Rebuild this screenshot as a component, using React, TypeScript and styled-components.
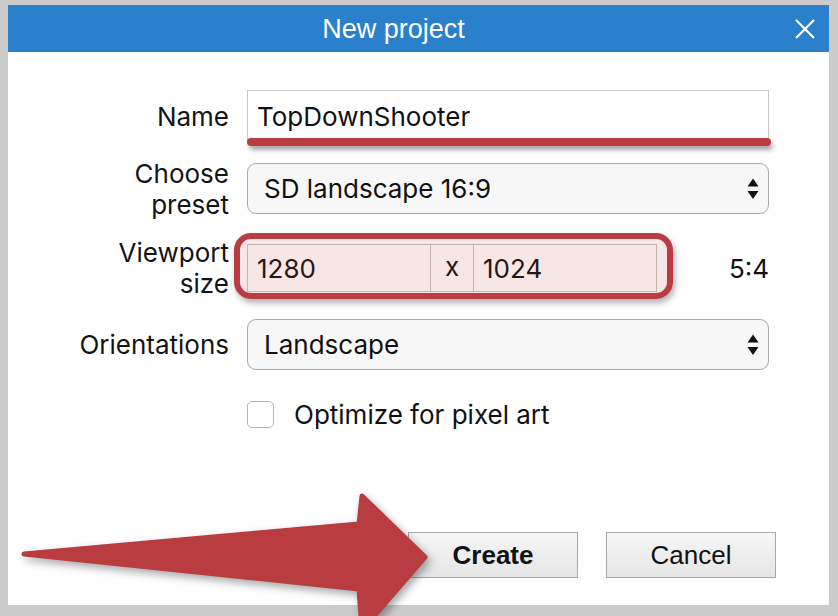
import React from "react";
import styled, { createGlobalStyle } from "styled-components";

const Global = createGlobalStyle`
  html, body { margin: 0; padding: 0; }
  body { background: #cbcbcb; width: 838px; height: 616px; overflow: hidden; }
`;

const RED = "#b83c40";
const SF = `"Inter", "Liberation Sans", sans-serif`;
const HV = `"Liberation Sans", Arial, sans-serif`;

const Frame = styled.div`
  position: relative;
  width: 838px;
  height: 616px;
  box-sizing: border-box;
  padding: 5px 9px 11px 8px;
`;

const Dialog = styled.div`
  background: #ffffff;
  height: 600px;
  display: flex;
  flex-direction: column;
`;

const TitleBar = styled.div`
  height: 47px;
  background: #2b80cc;
  display: flex;
  align-items: center;
`;

const Title = styled.div`
  flex: 1;
  text-align: center;
  color: #ffffff;
  font-family: ${HV};
  font-size: 27px;
  padding-top: 2px;
`;

const CloseButton = styled.div`
  width: 50px;
  height: 47px;
  display: flex;
  align-items: center;
  justify-content: center;
  padding-left: 2px;
  box-sizing: border-box;
`;

const Form = styled.div`
  display: flex;
  flex-direction: column;
  padding: 38px 60px 0 0;
`;

const Row = styled.div<{ $top: number; $h: number }>`
  display: grid;
  grid-template-columns: 221px 522px;
  grid-template-rows: ${(p) => p.$h}px;
  column-gap: 18px;
  align-items: center;
  margin-top: ${(p) => p.$top}px;
  height: ${(p) => p.$h}px;
`;

const Label = styled.div`
  text-align: right;
  font-family: ${SF};
  font-size: 26px;
  line-height: 31px;
  color: #141414;
`;

const TextInput = styled.div`
  position: relative;
  height: 52px;
  box-sizing: border-box;
  border: 1px solid #c6c6c6;
  background: #ffffff;
  display: flex;
  align-items: center;
  padding: 0 0 0 9px;
  font-family: ${SF};
  font-size: 26px;
  color: #111;
`;

const Underline = styled.div`
  position: absolute;
  left: -1px;
  right: -3px;
  bottom: -5px;
  height: 8px;
  border-radius: 4px;
  background: ${RED};
  box-shadow: 2px 4px 5px rgba(0, 0, 0, 0.35);
`;

const Select = styled.div`
  height: 51px;
  box-sizing: border-box;
  border: 1.5px solid #a9a9a9;
  border-radius: 9px;
  background: #f7f7f7;
  display: flex;
  align-items: center;
  justify-content: space-between;
  padding: 0 9px 0 16px;
  font-family: ${SF};
  font-size: 26px;
  color: #111;
`;

const ViewportLine = styled.div`
  display: flex;
  align-items: center;
  justify-content: space-between;
  height: 48px;
`;

const SizeGroup = styled.div`
  position: relative;
  display: flex;
  height: 48px;
`;

const SizeBox = styled.div`
  width: 184px;
  height: 48px;
  box-sizing: border-box;
  border: 1px solid #c4c4c4;
  background: #ffffff;
  display: flex;
  align-items: center;
  padding: 0 0 0 9px;
  font-family: ${SF};
  font-size: 26px;
  color: #111;
`;

const Times = styled.div`
  width: 42px;
  height: 48px;
  box-sizing: border-box;
  border-top: 1px solid #c4c4c4;
  border-bottom: 1px solid #c4c4c4;
  display: flex;
  align-items: center;
  justify-content: center;
  font-family: ${SF};
  font-size: 26px;
  color: #111;
  padding-bottom: 3px;
`;

const Highlight = styled.div`
  position: absolute;
  left: -13px;
  top: -11px;
  right: -16px;
  bottom: -7px;
  border: 6px solid ${RED};
  border-radius: 17px;
  background: rgba(184, 60, 64, 0.13);
  box-shadow: 2px 4px 6px rgba(0, 0, 0, 0.3);
`;

const Ratio = styled.div`
  font-family: ${SF};
  font-size: 26px;
  color: #111;
`;

const CheckLine = styled.div`
  display: flex;
  align-items: center;
  gap: 20px;
  font-family: ${SF};
  font-size: 26px;
  color: #111;
`;

const CheckBox = styled.div`
  width: 27px;
  height: 27px;
  box-sizing: border-box;
  border: 1.5px solid #b5b5b5;
  border-radius: 5px;
  background: #ffffff;
`;

const ButtonBar = styled.div`
  margin-top: auto;
  display: flex;
  justify-content: flex-end;
  gap: 28px;
  padding: 0 53px 27px 0;
`;

const Button = styled.div<{ $primary?: boolean }>`
  width: 170px;
  height: 46px;
  box-sizing: border-box;
  border: 1.5px solid #a8a8a8;
  background: linear-gradient(#f6f6f6, #e5e5e5);
  display: flex;
  align-items: center;
  justify-content: center;
  font-family: ${HV};
  font-size: 26px;
  font-weight: ${(p) => (p.$primary ? 700 : 400)};
  color: #111;
`;

const ArrowLayer = styled.svg`
  position: absolute;
  left: 0;
  top: 0;
  pointer-events: none;
  filter: drop-shadow(3px 4px 4px rgba(0, 0, 0, 0.35));
`;

const UpDown = () => (
  <svg width="12" height="22" viewBox="0 0 12 22">
    <path d="M0.5 8.5 L6 0.5 L11.5 8.5 Z" fill="#111" />
    <path d="M0.5 13 L11.5 13 L6 21 Z" fill="#111" />
  </svg>
);

export default function App() {
  return (
    <>
      <Global />
      <Frame>
        <Dialog>
          <TitleBar>
            <Title>New project</Title>
            <CloseButton>
              <svg width="20" height="20" viewBox="0 0 20 20">
                <path d="M1 1 L19 19 M19 1 L1 19" stroke="#fff" strokeWidth="2.2" />
              </svg>
            </CloseButton>
          </TitleBar>
          <Form>
            <Row $top={0} $h={52}>
              <Label>Name</Label>
              <TextInput>
                TopDownShooter
                <Underline />
              </TextInput>
            </Row>
            <Row $top={21} $h={51}>
              <Label>
                Choose
                <br />
                preset
              </Label>
              <Select>
                <span>SD landscape 16:9</span>
                <UpDown />
              </Select>
            </Row>
            <Row $top={30} $h={48}>
              <Label>
                Viewport
                <br />
                size
              </Label>
              <ViewportLine>
                <SizeGroup>
                  <SizeBox>1280</SizeBox>
                  <Times>x</Times>
                  <SizeBox>1024</SizeBox>
                  <Highlight />
                </SizeGroup>
                <Ratio>5:4</Ratio>
              </ViewportLine>
            </Row>
            <Row $top={27} $h={51}>
              <Label>Orientations</Label>
              <Select>
                <span>Landscape</span>
                <UpDown />
              </Select>
            </Row>
            <Row $top={31} $h={27}>
              <span />
              <CheckLine>
                <CheckBox />
                Optimize for pixel art
              </CheckLine>
            </Row>
          </Form>
          <ButtonBar>
            <Button $primary>Create</Button>
            <Button>Cancel</Button>
          </ButtonBar>
        </Dialog>
        <ArrowLayer width="838" height="616" viewBox="0 0 838 616">
          <path
            d="M24 554 L359 524 L362 496 L425 557 L362 630 L359 589 Z"
            fill={RED}
            stroke={RED}
            strokeWidth="5"
            strokeLinejoin="round"
          />
        </ArrowLayer>
      </Frame>
    </>
  );
}
